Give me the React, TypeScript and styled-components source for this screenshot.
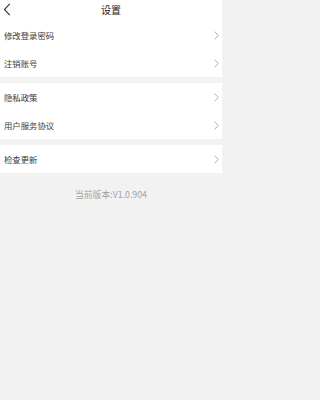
import React from "react";
import styled, { createGlobalStyle } from "styled-components";

const GlobalStyle = createGlobalStyle`
  html, body {
    margin: 0;
    padding: 0;
    background: #f2f2f2;
    font-family: "Noto Sans CJK SC", "Noto Sans", sans-serif;
  }
`;

const Page = styled.div`
  width: 222px;
  min-height: 400px;
  background: #f2f2f2;
  display: flex;
  flex-direction: column;
`;

const Header = styled.div`
  height: 21px;
  background: #fff;
  display: grid;
  grid-template-columns: 30px 1fr 30px;
  align-items: center;
`;

const BackButton = styled.div`
  padding-left: 3px;
  display: flex;
  align-items: center;
  height: 100%;
  margin-top: -2px;
`;

const Title = styled.div`
  text-align: center;
  font-size: 10px;
  color: #222;
  line-height: 1;
  margin-top: -1px;
`;

const Group = styled.div<{ $gap?: boolean }>`
  background: #fff;
  margin-top: ${(p) => (p.$gap ? "6px" : "0")};
  display: flex;
  flex-direction: column;
`;

const Row = styled.div`
  height: 28px;
  display: flex;
  align-items: center;
  justify-content: space-between;
  padding: 0 3px 0 4px;
`;

const Label = styled.span`
  font-size: 8.4px;
  color: #3a3a3a;
  line-height: 1;
`;

const Version = styled.div`
  margin-top: 18px;
  text-align: center;
  font-size: 8.8px;
  color: #a3a3a3;
  line-height: 1;
`;

const Chevron = () => (
  <svg width="5" height="9" viewBox="0 0 5 9">
    <path d="M0.6 0.6 L4.2 4.5 L0.6 8.4" fill="none" stroke="#a6a6a6" strokeWidth="0.9" />
  </svg>
);

const BackIcon = () => (
  <svg width="8" height="13" viewBox="0 0 8 13">
    <path d="M6.8 0.8 L1.4 6.5 L6.8 12.2" fill="none" stroke="#333" strokeWidth="1.1" />
  </svg>
);

const groups = [
  ["修改登录密码", "注销账号"],
  ["隐私政策", "用户服务协议"],
  ["检查更新"],
];

export default function App() {
  return (
    <>
      <GlobalStyle />
      <Page>
        <Header>
          <BackButton>
            <BackIcon />
          </BackButton>
          <Title>设置</Title>
          <div />
        </Header>
        {groups.map((items, gi) => (
          <Group key={gi} $gap={gi > 0}>
            {items.map((label) => (
              <Row key={label}>
                <Label>{label}</Label>
                <Chevron />
              </Row>
            ))}
          </Group>
        ))}
        <Version>当前版本:V1.0.904</Version>
      </Page>
    </>
  );
}
